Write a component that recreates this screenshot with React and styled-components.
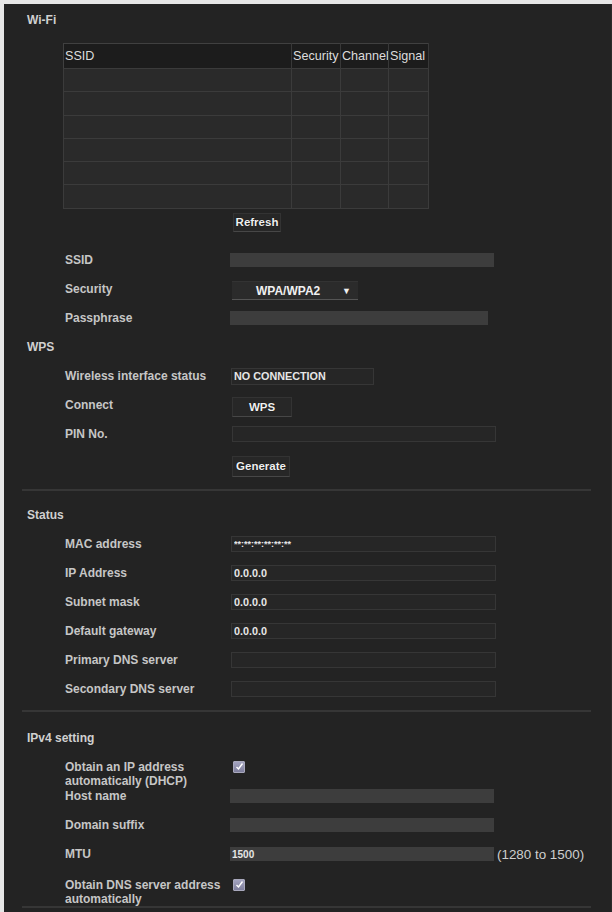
import styled, { createGlobalStyle } from 'styled-components';

const Global = createGlobalStyle`
  body {
    margin: 0;
    background: #e6e6e6;
    font-family: "Liberation Sans", Arial, sans-serif;
  }
`;

const Panel = styled.div`
  margin: 4px 0 0 4px;
  min-height: 908px;
  background: #232323;
  color: #c8c8c8;
  font-size: 12px;
  padding-top: 8px;
  box-sizing: border-box;
  border-right: 1px solid #2b2b2b;
`;

const Title = styled.div`
  height: ${(p) => (p.$first ? '16px' : '29px')};
  line-height: ${(p) => (p.$first ? '16px' : '29px')};
  margin-top: ${(p) => p.$mt || 0}px;
  padding-left: 23px;
  color: #d0d0d0;
  font-weight: 700;
  font-size: 12px;
`;

const Table = styled.table`
  margin: 15px 0 0 59px;
  width: 365px;
  table-layout: fixed;
  border-collapse: collapse;
  border: 1px solid #404040;

  th {
    height: 24px;
    background: #1c1c1c;
    color: #dcdcdc;
    font-weight: 400;
    font-size: 12.6px;
    text-align: left;
    padding: 0 0 0 1px;
    white-space: nowrap;
    overflow: hidden;
    border-right: 1px solid #383838;
  }

  td {
    height: 22.3px;
    padding: 0;
    background: #2a2a2a;
    border: 1px solid #3b3b3b;
  }
`;

const Button = styled.button`
  display: block;
  width: ${(p) => p.$w}px;
  height: ${(p) => p.$h || 20}px;
  margin: ${(p) => p.$m || '0'};
  padding: 0;
  background: #272727;
  border: 1px solid #333;
  border-bottom-color: #474747;
  color: #f0f0f0;
  font-family: "Liberation Sans", Arial, sans-serif;
  font-weight: 700;
  font-size: 11.5px;
  text-shadow: 0 0 1px #000;
`;

const Row = styled.div`
  display: flex;
  align-items: center;
  height: ${(p) => p.$h || 29}px;
  padding-left: 61px;
  margin-top: ${(p) => p.$mt || 0}px;
`;

const Label = styled.div`
  flex: none;
  width: 165px;
  min-height: 14px;
  line-height: 14px;
  color: #c6c6c6;
  font-weight: 700;
  font-size: 12px;
  white-space: nowrap;
`;

const Input = styled.input`
  box-sizing: border-box;
  width: ${(p) => p.$w}px;
  height: ${(p) => (p.$dark ? 16 : 14)}px;
  margin-left: ${(p) => p.$ml || 0}px;
  padding: 0 0 0 2px;
  background: ${(p) => (p.$dark ? '#262626' : '#3d3d3d')};
  border: ${(p) => (p.$dark ? '1px solid #363636' : 'none')};
  color: #e6e6e6;
  font-family: "Liberation Sans", Arial, sans-serif;
  font-size: ${(p) => p.$fs || 10.8}px;
  font-weight: 700;
  outline: none;
`;

const Select = styled.div`
  display: flex;
  align-items: center;
  justify-content: space-between;
  box-sizing: border-box;
  width: 126px;
  height: 19px;
  margin: 3px 0 0 2px;
  padding: 0 7px 0 24px;
  background: #2b2b2b;
  border-top: 1px solid #333;
  border-bottom: 1px solid #555;
  color: #f0f0f0;
  font-weight: 700;
  font-size: 12px;

  span:last-child {
    font-size: 9px;
  }
`;

const Check = styled.span`
  display: inline-flex;
  align-items: center;
  justify-content: center;
  align-self: flex-start;
  width: 12px;
  height: 12px;
  margin: 1px 0 0 3px;
  box-sizing: border-box;
  border: 1px solid #a8a8bc;
  border-radius: 1px;
  background: linear-gradient(#a4a4c0, #7e7e9c);
`;

const Note = styled.span`
  margin-left: 3px;
  color: #cfcfcf;
  font-size: 13.4px;
`;

const Divider = styled.div`
  height: 2px;
  margin: ${(p) => p.$mt}px 20px 0 18px;
  background: #363636;
`;

function CheckBox() {
  return (
    <Check>
      <svg width="9" height="9" viewBox="0 0 9 9">
        <path d="M1.5 5l2 2 4-5.5" fill="none" stroke="#fff" strokeWidth="1.4" />
      </svg>
    </Check>
  );
}

const statusRows = [
  ['MAC address', '**:**:**:**:**:**'],
  ['IP Address', '0.0.0.0'],
  ['Subnet mask', '0.0.0.0'],
  ['Default gateway', '0.0.0.0'],
  ['Primary DNS server', ''],
  ['Secondary DNS server', ''],
];

export default function App() {
  return (
    <>
      <Global />
      <Panel>
        <Title $first>Wi-Fi</Title>
        <Table>
          <colgroup>
            <col style={{ width: 228 }} />
            <col style={{ width: 49 }} />
            <col style={{ width: 48 }} />
            <col style={{ width: 40 }} />
          </colgroup>
          <thead>
            <tr>
              <th>SSID</th>
              <th>Security</th>
              <th>Channel</th>
              <th>Signal</th>
            </tr>
          </thead>
          <tbody>
            {[0, 1, 2, 3, 4, 5].map((i) => (
              <tr key={i}>
                <td />
                <td />
                <td />
                <td />
              </tr>
            ))}
          </tbody>
        </Table>
        <Button $w={48} $h={19} $m="4px 0 0 229px">Refresh</Button>

        <Row $mt={14}>
          <Label>SSID</Label>
          <Input $w={264} readOnly />
        </Row>
        <Row>
          <Label>Security</Label>
          <Select>
            <span>WPA/WPA2</span>
            <span>▼</span>
          </Select>
        </Row>
        <Row>
          <Label>Passphrase</Label>
          <Input $w={258} readOnly />
        </Row>

        <Title>WPS</Title>
        <Row>
          <Label>Wireless interface status</Label>
          <Input $dark $w={143} $ml={1} value="NO CONNECTION" readOnly style={{ height: 17 }} />
        </Row>
        <Row>
          <Label>Connect</Label>
          <Button $w={60} $m="4px 0 0 2px">WPS</Button>
        </Row>
        <Row>
          <Label>PIN No.</Label>
          <Input $dark $w={264} $ml={2} readOnly />
        </Row>
        <Row $mt={3}>
          <Label />
          <Button $w={58} $h={21} $m="0 0 0 2px">Generate</Button>
        </Row>

        <Divider $mt={8} />

        <Title $mt={10}>Status</Title>
        {statusRows.map(([label, value], i) => (
          <Row key={label}>
            <Label>{label}</Label>
            <Input $dark $w={265} $ml={1} $fs={i === 0 ? 9 : 10.8} value={value} readOnly />
          </Row>
        ))}

        <Divider $mt={6} />

        <Title $mt={12}>IPv4 setting</Title>
        <Row $h={28} $mt={7}>
          <Label>
            Obtain an IP address
            <br />
            automatically (DHCP)
          </Label>
          <CheckBox />
        </Row>
        <Row $h={15} $mt={1}>
          <Label>Host name</Label>
          <Input $w={264} readOnly />
        </Row>
        <Row $mt={7}>
          <Label>Domain suffix</Label>
          <Input $w={264} readOnly />
        </Row>
        <Row>
          <Label>MTU</Label>
          <Input $w={264} $fs={10} value="1500" readOnly />
          <Note>(1280 to 1500)</Note>
        </Row>
        <Row $h={28} $mt={9}>
          <Label>
            Obtain DNS server address
            <br />
            automatically
          </Label>
          <CheckBox />
        </Row>

        <Divider $mt={0} />
      </Panel>
    </>
  );
}
